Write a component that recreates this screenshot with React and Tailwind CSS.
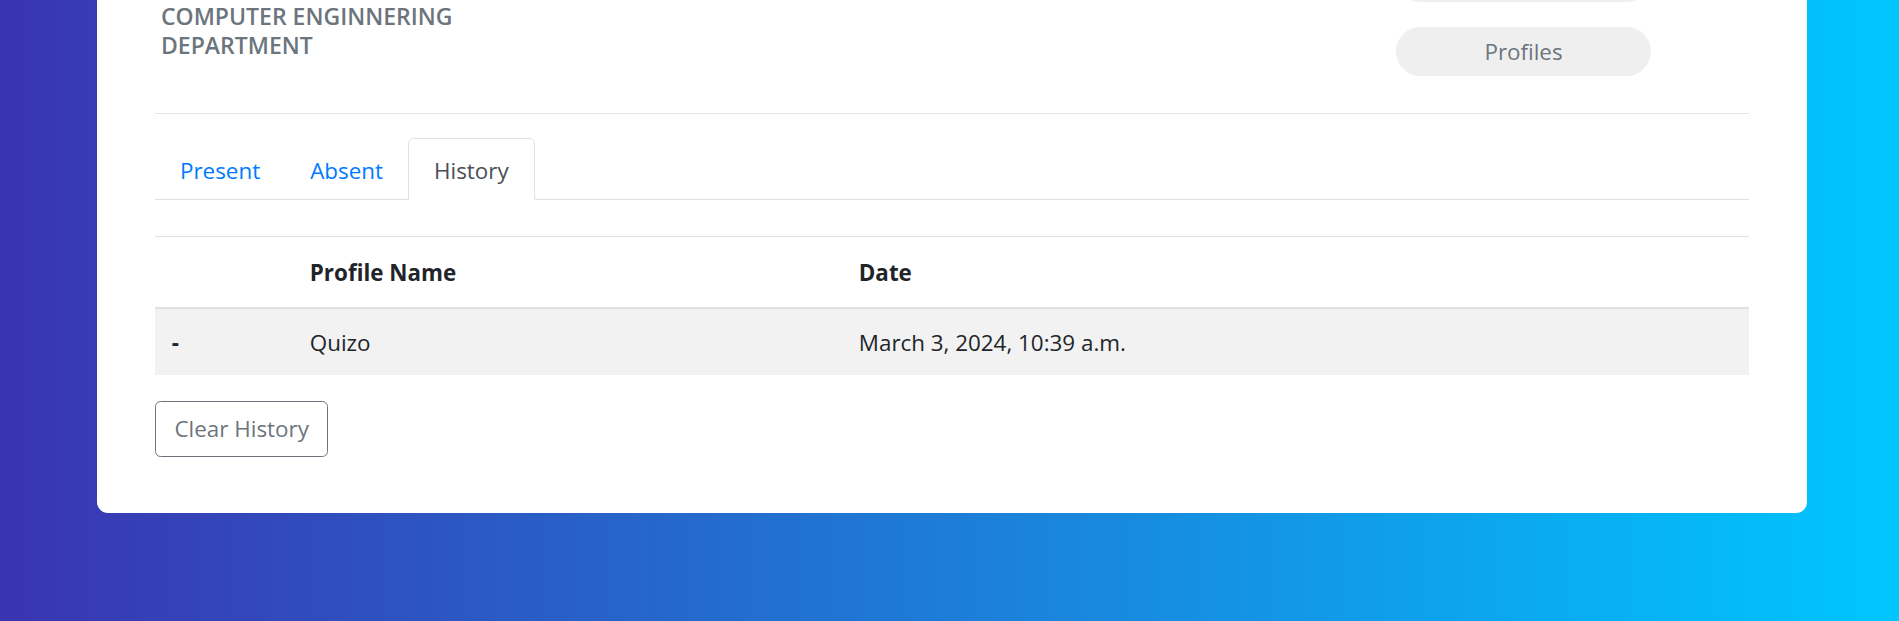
export default function App() {
  const font = { fontFamily: '"Open Sans", "Noto Sans", sans-serif' };
  return (
    <div
      className="h-[621px] w-full overflow-hidden bg-[linear-gradient(to_right,#3a34b0,#00c6ff)]"
      style={font}
    >
      <div className="ml-[97px] w-[1710px] bg-white rounded-b-[11px] px-[58px] pb-[56px]">
        {/* header */}
        <div className="flex justify-between">
          <div className="pl-[6px] pt-[2px] text-[23px] leading-[29px] font-semibold text-[#6c757d]">
            <div>COMPUTER ENGINNERING</div>
            <div>DEPARTMENT</div>
          </div>
          <div className="mr-[98px] flex w-[255px] flex-col">
            <div className="-mt-[47px] h-[49px] w-full rounded-full bg-[#efefef]" />
            <button className="mt-[25px] h-[49px] w-full rounded-full bg-[#efefef] text-[22.4px] font-medium text-[#6c757d]">
              Profiles
            </button>
          </div>
        </div>

        <div className="mt-[37px] h-px bg-[#e5e5e5]" />

        {/* tabs */}
        <div className="mt-[24px] flex h-[62px] items-end border-b border-[#dee2e6]">
          <div className="-mb-px flex h-[62px] items-center px-[25px] pt-[3px] text-[22.4px] text-[#007bff]">
            Present
          </div>
          <div className="-mb-px flex h-[62px] items-center px-[25px] pt-[3px] text-[22.4px] text-[#007bff]">
            Absent
          </div>
          <div className="-mb-px flex h-[62px] items-center rounded-t-[5.6px] border border-b-white border-[#dee2e6] bg-white px-[25px] pt-[3px] text-[22.4px] text-[#495057]">
            History
          </div>
        </div>

        {/* table */}
        <table className="mt-[36px] w-full border-collapse text-[22.4px] text-[#212529]">
          <colgroup>
            <col className="w-[138px]" />
            <col className="w-[549px]" />
            <col />
          </colgroup>
          <thead>
            <tr>
              <th className="h-[71px] border-t border-b-2 border-[#dee2e6] px-[16.8px] pt-[2px] text-left font-bold"></th>
              <th className="h-[71px] border-t border-b-2 border-[#dee2e6] px-[16.8px] pt-[2px] text-left font-bold">
                Profile Name
              </th>
              <th className="h-[71px] border-t border-b-2 border-[#dee2e6] px-[16.8px] pt-[2px] text-left font-bold">
                Date
              </th>
            </tr>
          </thead>
          <tbody>
            <tr className="bg-[#f2f2f2]">
              <th className="h-[67px] px-[16.8px] pt-[2px] text-left font-bold">-</th>
              <td className="h-[67px] px-[16.8px] pt-[2px]">Quizo</td>
              <td className="h-[67px] px-[16.8px] pt-[2px]">March 3, 2024, 10:39 a.m.</td>
            </tr>
          </tbody>
        </table>

        <button className="mt-[26px] h-[56px] rounded-[5.6px] border border-[#6c757d] px-[18.5px] text-[22.4px] text-[#6c757d]">
          Clear History
        </button>
      </div>
    </div>
  );
}
